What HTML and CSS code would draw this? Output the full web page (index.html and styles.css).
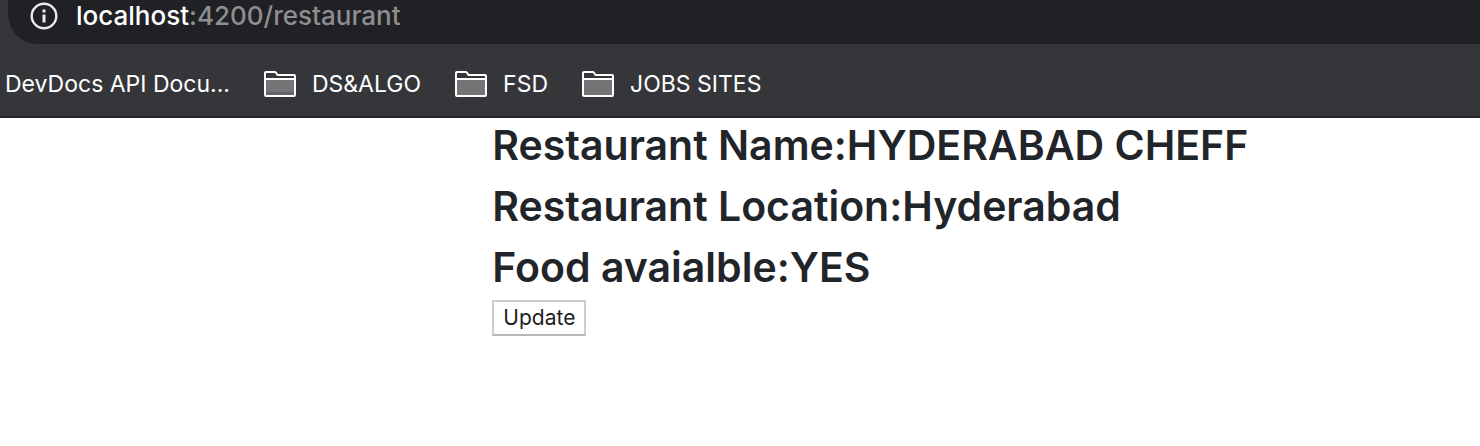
FILE: index.html
```html
<!DOCTYPE html>
<html lang="en">
<head>
<meta charset="utf-8">
<title>Restaurant</title>
<link rel="stylesheet" href="styles.css">
</head>
<body>
<header class="browser">
  <div class="address">
    <svg class="info" viewBox="0 0 28 28" aria-hidden="true"><circle cx="14" cy="14" r="12.3" fill="none" stroke="#e8eaed" stroke-width="2.4"/><path d="M14 12.5v8M14 7.5v3" stroke="#e8eaed" stroke-width="3"/></svg>
    <span class="url"><span class="host">localhost</span>:4200/restaurant</span>
  </div>
  <nav class="bookmarks">
    <a class="bookmark" href="#">DevDocs API Docu...</a>
    <a class="bookmark" href="#"><svg class="folder" viewBox="0 0 32 26" aria-hidden="true"><path d="M2 8h28v16H2z" fill="#737476"/><path d="M2 21h28v3H2z" fill="#626366"/><path d="M2 1h8.500q1 0 1.600.8L13.500 4H30q1 0 1 1v19q0 1-1 1H2q-1 0-1-1V2q0-1 1-1zM1 8h30" fill="none" stroke="#fff" stroke-width="2"/></svg>DS&amp;ALGO</a>
    <a class="bookmark" href="#"><svg class="folder" viewBox="0 0 32 26" aria-hidden="true"><path d="M2 8h28v16H2z" fill="#737476"/><path d="M2 1h8.500q1 0 1.600.8L13.500 4H30q1 0 1 1v19q0 1-1 1H2q-1 0-1-1V2q0-1 1-1zM1 8h30" fill="none" stroke="#fff" stroke-width="2"/></svg>FSD</a>
    <a class="bookmark" href="#"><svg class="folder" viewBox="0 0 32 26" aria-hidden="true"><path d="M2 8h28v16H2z" fill="#737476"/><path d="M2 1h8.500q1 0 1.600.8L13.500 4H30q1 0 1 1v19q0 1-1 1H2q-1 0-1-1V2q0-1 1-1zM1 8h30" fill="none" stroke="#fff" stroke-width="2"/></svg>JOBS SITES</a>
  </nav>
</header>
<main class="restaurant">
  <div class="details">
    <h3 class="detail">Restaurant Name:HYDERABAD CHEFF</h3>
    <h3 class="detail">Restaurant Location:Hyderabad</h3>
    <h3 class="detail">Food avaialble:YES</h3>
  </div>
  <button class="update" type="button">Update</button>
</main>
</body>
</html>
```
FILE: styles.css
```css
* { box-sizing: border-box; }
body { margin: 0; background: #fff; font-family: Inter, "Liberation Sans", sans-serif; color: #212529; }
.browser { background: #35363a; border-bottom: 2px solid #252427; }
.address { display: flex; align-items: flex-start; gap: 18px; height: 44px; margin-left: 8px; padding: 2px 22px 0; background: #202124; border-bottom-left-radius: 30px; font-size: 26px; font-weight: 500; line-height: 28px; color: #8e8e90; }
.info { flex: none; width: 28px; height: 28px; }
.host { color: #fff; }
.bookmarks { display: flex; gap: 34px; padding: 25px 5px 17px; }
.bookmark { display: flex; align-items: center; gap: 16px; color: #fff; text-decoration: none; font-size: 23px; line-height: 30px; white-space: nowrap; }
.folder { flex: none; width: 32px; height: 26px; }
.restaurant { padding: 2px 0 0 calc(100% / 3 - 1px); }
.details { display: grid; gap: 11px; margin-bottom: 8px; }
.detail { margin: 0; font-size: 41px; font-weight: 600; line-height: 50px; white-space: nowrap; }
.update { display: block; height: 36px; padding: 0 9px 1px; border: 2px solid #cecece; border-bottom-color: #b8b8b8; background: #fff; color: #212121; font: 21px/28px Inter, "Liberation Sans", sans-serif; }
```
